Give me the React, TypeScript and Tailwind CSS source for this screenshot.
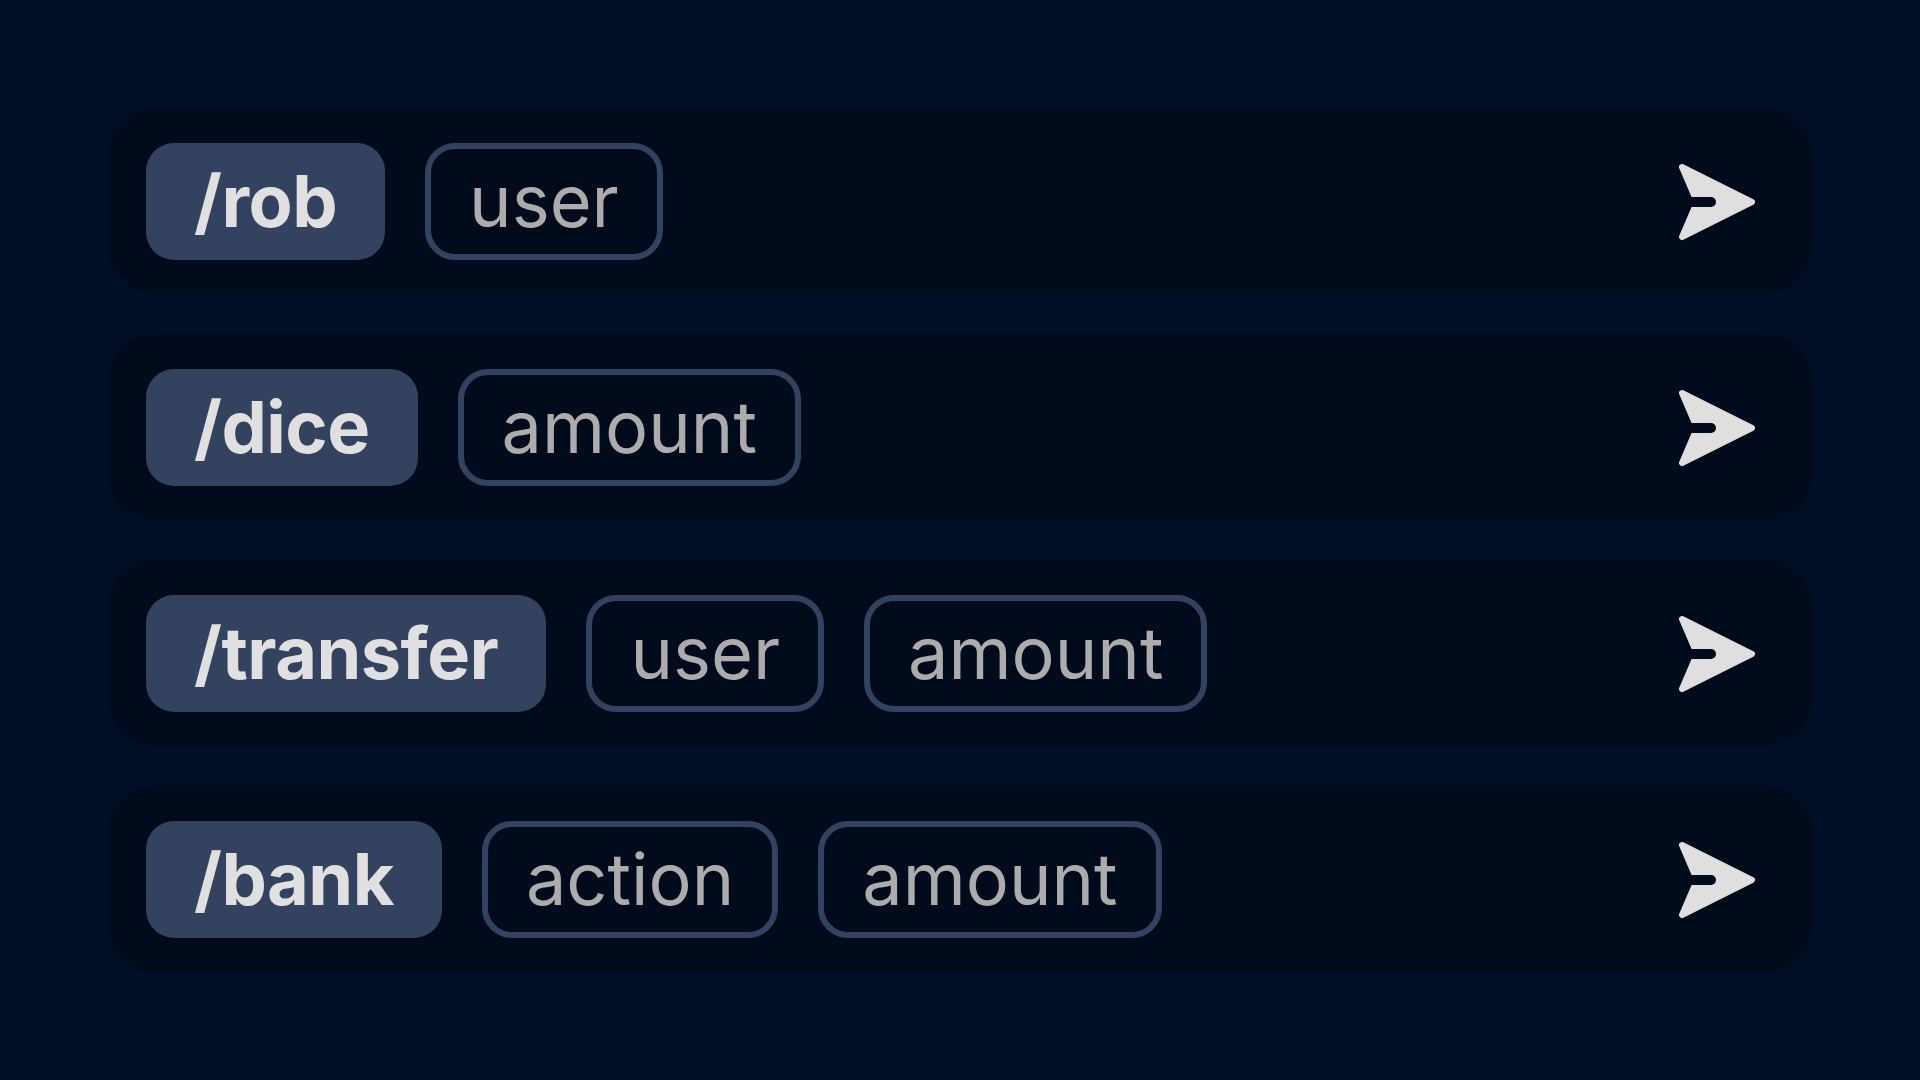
import React from "react";

type Command = { name: string; args: string[] };

const commands: Command[] = [
  { name: "/rob", args: ["user"] },
  { name: "/dice", args: ["amount"] },
  { name: "/transfer", args: ["user", "amount"] },
  { name: "/bank", args: ["action", "amount"] },
];

// filled arrow with a rounded slot cut into its back
const SendArrow = () => (
  <svg width="80" height="80" viewBox="0 0 80 80" className="shrink-0">
    <path
      d="M6 6 L76 41 L6 76 L21 41 Z"
      fill="#dfdfdf"
      stroke="#dfdfdf"
      strokeWidth="6"
      strokeLinejoin="round"
    />
    <path d="M14 41 H35" stroke="#010b1b" strokeWidth="10" strokeLinecap="round" />
  </svg>
);

const CommandRow = ({ cmd }: { cmd: Command }) => {
  return (
    <div className="flex h-[186px] items-center justify-between rounded-[48px] bg-[#010b1b] pl-[38px] pr-[56px]">
      <div className="flex items-center gap-[40px]">
        {/* command name */}
        <div className="flex h-[117px] items-center rounded-[28px] bg-[#33425e] px-[48px] text-[72px] font-bold leading-none tracking-[-0.5px] text-[#e0e0e0]">
          {cmd.name}
        </div>
        {cmd.args.map((arg, i) => (
          <div
            key={i}
            className="flex h-[117px] items-center rounded-[30px] border-[6px] border-[#33425e] px-[38px] text-[72px] font-normal leading-none text-[#acacac]"
          >
            {arg}
          </div>
        ))}
      </div>
      <SendArrow />
    </div>
  );
};

export default function App() {
  return (
    <div className="flex h-[1080px] w-[1920px] flex-col gap-[40px] bg-[#000f26] p-[108px] font-[Inter,sans-serif]">
      {commands.map((c) => (
        <CommandRow key={c.name} cmd={c} />
      ))}
    </div>
  );
}
